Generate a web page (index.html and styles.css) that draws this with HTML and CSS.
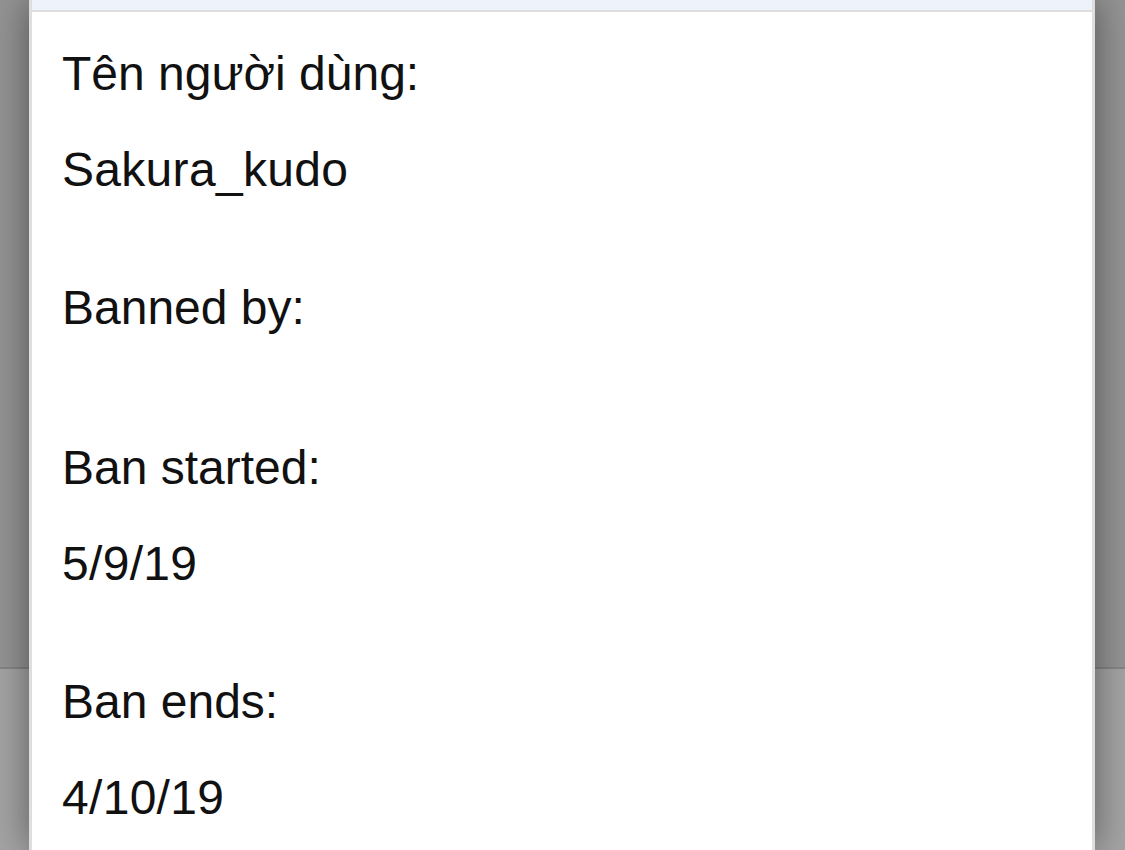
FILE: index.html
```html
<!DOCTYPE html>
<html lang="vi">
<head>
<meta charset="utf-8">
<title>Ban details</title>
<link rel="stylesheet" href="styles.css">
</head>
<body>
<div class="screen">
  <div class="modal">
    <div class="modal-header"></div>
    <div class="modal-body">
      <div class="field">
        <div class="label">Tên người dùng:</div>
        <div class="value">Sakura_kudo</div>
      </div>
      <div class="field field--empty">
        <div class="label">Banned by:</div>
      </div>
      <div class="field">
        <div class="label">Ban started:</div>
        <div class="value">5/9/19</div>
      </div>
      <div class="field">
        <div class="label">Ban ends:</div>
        <div class="value">4/10/19</div>
      </div>
    </div>
  </div>
</div>
</body>
</html>
```
FILE: styles.css
```css
html, body {
  margin: 0;
  padding: 0;
}

body {
  font-family: "Liberation Sans", Arial, Helvetica, sans-serif;
  color: #111111;
}

.screen {
  height: 850px;
  overflow: hidden;
  display: flex;
  justify-content: center;
  background: linear-gradient(to bottom,
    #949494 0, #949494 667px,
    #858585 667px, #858585 669px,
    #a4a4a4 669px, #a4a4a4 100%);
}

.modal {
  width: 1060px;
  margin-left: -1px;
  border-left: 3px solid #dedede;
  border-right: 3px solid #dedede;
  background: #ffffff;
  box-shadow: 0 0 36px rgba(0, 0, 0, 0.45);
  display: flex;
  flex-direction: column;
}

.modal-header {
  height: 10px;
  background: #eef3fb;
  border-bottom: 2px solid #dedede;
}

.modal-body {
  padding: 34px 30px 0 30px;
  display: flex;
  flex-direction: column;
  gap: 82px;
}

.field {
  display: flex;
  flex-direction: column;
  gap: 40px;
}

.field--empty {
  padding-bottom: 22px;
}

.label,
.value {
  font-size: 48px;
  line-height: 56px;
  height: 56px;
  white-space: nowrap;
}

.value {
  letter-spacing: 0.3px;
}
```
